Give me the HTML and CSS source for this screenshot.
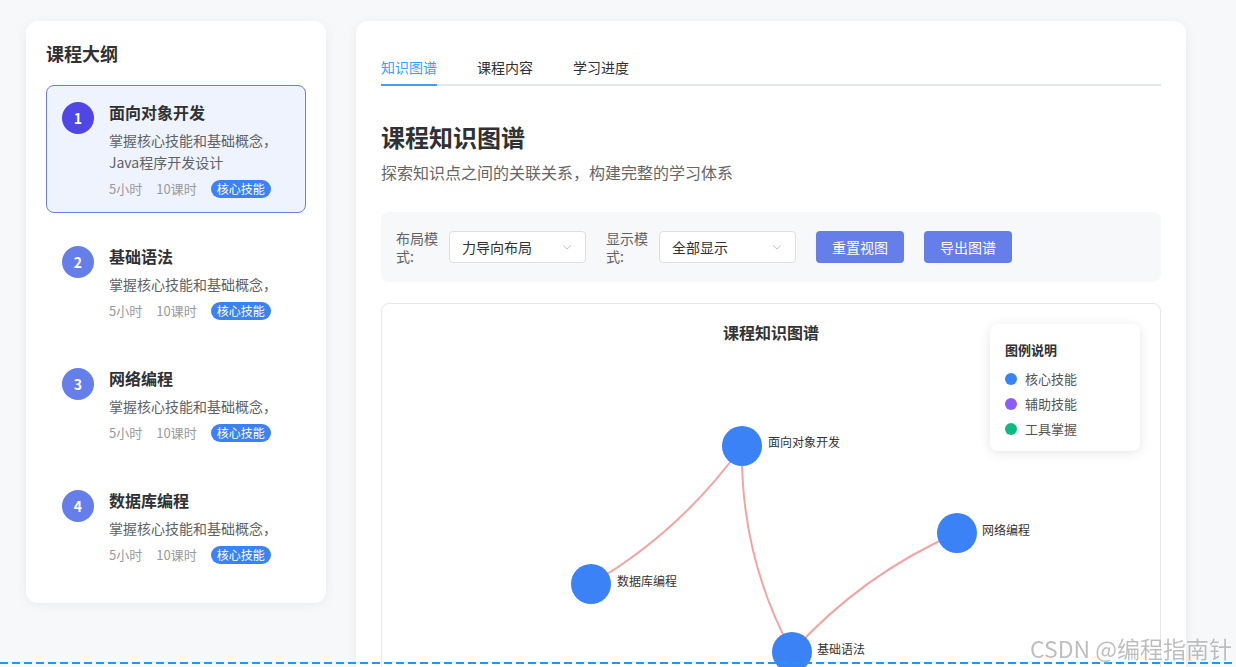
FILE: index.html
```
<!DOCTYPE html>
<html lang="zh-CN">

<head>
    <meta charset="UTF-8">
    <meta name="viewport" content="width=device-width, initial-scale=1.0">
    <title>课程知识图谱</title>
    <link rel="stylesheet" href="styles.css">
</head>

<body>

    <div class="page">
        <aside class="outline-card">
            <h2 class="outline-title">课程大纲</h2>
            <div class="outline-list">
                <div class="outline-item active">
                    <div class="step">1</div>
                    <div class="item-body">
                        <div class="item-title">面向对象开发</div>
                        <div class="item-desc">掌握核心技能和基础概念，Java程序开发设计</div>
                        <div class="item-meta">
                            <span>5小时</span>
                            <span>10课时</span>
                            <span class="tag">核心技能</span>
                        </div>
                    </div>
                </div>
                <div class="outline-item">
                    <div class="step">2</div>
                    <div class="item-body">
                        <div class="item-title">基础语法</div>
                        <div class="item-desc">掌握核心技能和基础概念，</div>
                        <div class="item-meta">
                            <span>5小时</span>
                            <span>10课时</span>
                            <span class="tag">核心技能</span>
                        </div>
                    </div>
                </div>
                <div class="outline-item">
                    <div class="step">3</div>
                    <div class="item-body">
                        <div class="item-title">网络编程</div>
                        <div class="item-desc">掌握核心技能和基础概念，</div>
                        <div class="item-meta">
                            <span>5小时</span>
                            <span>10课时</span>
                            <span class="tag">核心技能</span>
                        </div>
                    </div>
                </div>
                <div class="outline-item">
                    <div class="step">4</div>
                    <div class="item-body">
                        <div class="item-title">数据库编程</div>
                        <div class="item-desc">掌握核心技能和基础概念，</div>
                        <div class="item-meta">
                            <span>5小时</span>
                            <span>10课时</span>
                            <span class="tag">核心技能</span>
                        </div>
                    </div>
                </div>
            </div>
        </aside>

        <main class="main-card">
            <div class="tabs">
                <div class="tab active">知识图谱</div>
                <div class="tab">课程内容</div>
                <div class="tab">学习进度</div>
            </div>

            <h1 class="graph-heading">课程知识图谱</h1>
            <p class="graph-sub">探索知识点之间的关联关系，构建完整的学习体系</p>

            <div class="toolbar">
                <div class="field">
                    <label class="field-label">布局模式:</label>
                    <div class="select">
                        <span>力导向布局</span>
                        <svg class="chevron" width="12" height="12" viewBox="0 0 12 12"><path d="M2 4.5 L6 8 L10 4.5" fill="none" stroke="#c0c4cc" stroke-width="1"/></svg>
                    </div>
                </div>
                <div class="field">
                    <label class="field-label">显示模式:</label>
                    <div class="select">
                        <span>全部显示</span>
                        <svg class="chevron" width="12" height="12" viewBox="0 0 12 12"><path d="M2 4.5 L6 8 L10 4.5" fill="none" stroke="#c0c4cc" stroke-width="1"/></svg>
                    </div>
                </div>
                <button class="btn">重置视图</button>
                <button class="btn">导出图谱</button>
            </div>

            <div class="graph-box">
                <svg class="graph" width="778" height="420" viewBox="0 0 778 420">
                    <text class="graph-title" x="389" y="35" text-anchor="middle">课程知识图谱</text>
                    <path d="M360 142 Q299.5 227 209 280" class="edge"/>
                    <path d="M360 142 Q358 252 410 348" class="edge"/>
                    <path d="M410 348 Q479.6 270.6 575 229" class="edge"/>
                    <circle cx="360" cy="142" r="20" class="node"/>
                    <circle cx="209" cy="280" r="20" class="node"/>
                    <circle cx="575" cy="229" r="20" class="node"/>
                    <circle cx="410" cy="348" r="20" class="node"/>
                    <text class="node-label" x="386" y="143">面向对象开发</text>
                    <text class="node-label" x="235" y="282">数据库编程</text>
                    <text class="node-label" x="600" y="231">网络编程</text>
                    <text class="node-label" x="435" y="350">基础语法</text>
                </svg>

                <div class="legend">
                    <div class="legend-title">图例说明</div>
                    <div class="legend-item"><span class="dot dot-core"></span>核心技能</div>
                    <div class="legend-item"><span class="dot dot-aux"></span>辅助技能</div>
                    <div class="legend-item"><span class="dot dot-tool"></span>工具掌握</div>
                </div>
            </div>
        </main>
    </div>

    <div class="dash-line"></div>
    <div class="watermark">CSDN @编程指南针</div>

</body>

</html>
```

FILE: styles.css
```
body {
    margin: 0;
    background-color: #f7f8fa;
    font-family: "Noto Sans CJK SC", "Noto Sans", sans-serif;
    color: #303133;
    overflow: hidden;
}

.page {
    display: flex;
    align-items: flex-start;
    gap: 30px;
    padding: 21px 26px 0;
}

/* 左侧大纲 */
.outline-card {
    width: 300px;
    box-sizing: border-box;
    background-color: #fff;
    border-radius: 12px;
    padding: 20px 20px 24px;
    box-shadow: 0 2px 12px rgba(0, 0, 0, 0.06);
}

.outline-title {
    margin: 0 0 20px;
    font-size: 18px;
    line-height: 24px;
    font-weight: bold;
    color: #303133;
}

.outline-list {
    display: flex;
    flex-direction: column;
    gap: 16px;
}

.outline-item {
    display: flex;
    gap: 15px;
    padding: 16px 15px 13px;
    border: 1px solid transparent;
    border-radius: 8px;
}

.outline-item.active {
    background-color: #eef3fe;
    border-color: #6b7fe0;
}

.step {
    flex: none;
    width: 32px;
    height: 32px;
    border-radius: 50%;
    background-color: #667eea;
    color: #fff;
    font-size: 14px;
    font-weight: bold;
    display: flex;
    align-items: center;
    justify-content: center;
}

.outline-item.active .step {
    background-color: #4f46e5;
}

.item-body {
    flex: 1;
    min-width: 0;
}

.item-title {
    font-size: 16px;
    line-height: 20px;
    font-weight: bold;
    color: #303133;
}

.item-desc {
    margin-top: 7px;
    font-size: 14px;
    line-height: 22px;
    color: #606266;
}

.item-meta {
    margin-top: 6px;
    display: flex;
    align-items: center;
    gap: 14px;
    font-size: 13px;
    line-height: 20px;
    color: #9a9a9a;
}

.tag {
    background-color: #3b82f6;
    color: #fff;
    font-size: 12px;
    line-height: 18px;
    padding: 0 6px;
    border-radius: 10px;
}

/* 右侧主体 */
.main-card {
    width: 830px;
    height: 700px;
    box-sizing: border-box;
    background-color: #fff;
    border-radius: 12px;
    padding: 24px 25px;
    box-shadow: 0 2px 12px rgba(0, 0, 0, 0.06);
}

.tabs {
    display: flex;
    gap: 40px;
    border-bottom: 2px solid #e4e7ed;
}

.tab {
    font-size: 14px;
    line-height: 22px;
    padding: 11px 0 6px;
    color: #303133;
    border-bottom: 2px solid transparent;
    margin-bottom: -2px;
}

.tab.active {
    color: #409eff;
    border-bottom-color: #409eff;
}

.graph-heading {
    margin: 35px 0 0;
    font-size: 24px;
    line-height: 32px;
    font-weight: bold;
    color: #303133;
}

.graph-sub {
    margin: 8px 0 0;
    font-size: 16px;
    line-height: 22px;
    color: #666;
}

.toolbar {
    margin-top: 29px;
    display: flex;
    align-items: center;
    gap: 20px;
    padding: 17px 15px;
    background-color: #f7f8fa;
    border-radius: 8px;
}

.field {
    display: flex;
    align-items: center;
    gap: 7px;
}

.field-label {
    width: 46px;
    font-size: 14px;
    line-height: 18px;
    color: #606266;
}

.select {
    width: 137px;
    height: 32px;
    box-sizing: border-box;
    border: 1px solid #dcdfe6;
    border-radius: 4px;
    background-color: #fff;
    display: flex;
    align-items: center;
    justify-content: space-between;
    padding: 0 12px;
    font-size: 14px;
    color: #303133;
}

.btn {
    height: 32px;
    padding: 0 16px;
    border: none;
    border-radius: 4px;
    background-color: #667eea;
    color: #fff;
    font-family: inherit;
    font-size: 14px;
}

.graph-box {
    position: relative;
    margin-top: 21px;
    height: 460px;
    border: 1px solid #e5e7eb;
    border-radius: 8px;
}

.graph {
    display: block;
}

.graph-title {
    font-size: 16px;
    font-weight: bold;
    fill: #333;
}

.edge {
    fill: none;
    stroke: #f4a3a3;
    stroke-width: 2;
}

.node {
    fill: #3b82f6;
}

.node-label {
    font-size: 12px;
    fill: #333;
}

.legend {
    position: absolute;
    top: 20px;
    right: 20px;
    width: 150px;
    box-sizing: border-box;
    padding: 18px 15px 10px;
    background-color: #fff;
    border-radius: 8px;
    box-shadow: 0 2px 12px rgba(0, 0, 0, 0.1);
}

.legend-title {
    font-size: 13px;
    line-height: 16px;
    font-weight: bold;
    color: #303133;
    margin-bottom: 8px;
}

.legend-item {
    display: flex;
    align-items: center;
    gap: 8px;
    font-size: 13px;
    line-height: 25px;
    color: #555;
}

.dot {
    width: 12px;
    height: 12px;
    border-radius: 50%;
}

.dot-core {
    background-color: #3b82f6;
}

.dot-aux {
    background-color: #8b5cf6;
}

.dot-tool {
    background-color: #10b981;
}

.dash-line {
    position: fixed;
    left: 0;
    right: 0;
    top: 662px;
    height: 2px;
    background: repeating-linear-gradient(to right, #2196f3 0 8px, transparent 8px 12px);
}

.watermark {
    position: fixed;
    right: 4px;
    top: 632px;
    font-size: 23px;
    line-height: 32px;
    color: rgba(0, 0, 0, 0.26);
    text-shadow: 0 0 2px #fff;
}
```
